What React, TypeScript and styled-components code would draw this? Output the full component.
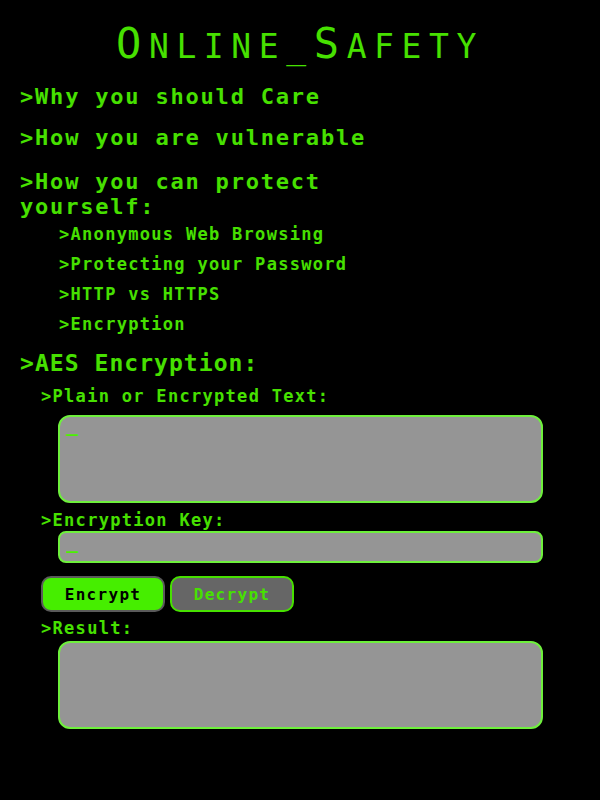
import React from "react";
import styled, { createGlobalStyle } from "styled-components";

const Global = createGlobalStyle`
  html, body { margin: 0; padding: 0; background: #000; }
  body { font-family: "DejaVu Sans Mono", "Liberation Mono", monospace; color: #47e000; }
  * { box-sizing: border-box; }
`;

const Page = styled.main`
  display: flex;
  flex-direction: column;
  padding: 22px 20px 40px;
  min-height: 800px;
  background: #000;
`;

const Title = styled.h1`
  margin: 0 0 12px;
  height: 50px;
  font-size: 33px;
  line-height: 50px;
  font-weight: normal;
  text-transform: uppercase;
  letter-spacing: 7.6px;
  text-align: center;
  color: #47e000;
`;

const Cap = styled.span`
  font-size: 42px;
  line-height: 0;
`;

const Nav = styled.nav`
  display: flex;
  flex-direction: column;
  max-width: 400px;
`;

const Heading = styled.a<{ $mt?: number }>`
  display: block;
  margin-top: ${(p) => p.$mt ?? 0}px;
  font-size: 22px;
  line-height: 25px;
  font-weight: bold;
  letter-spacing: 1.8px;
  color: #47e000;
  text-decoration: none;
`;

const SubList = styled.ul`
  list-style: none;
  margin: 0;
  padding: 0 0 0 39px;
`;

const SubItem = styled.li`
  font-size: 17px;
  line-height: 30px;
  font-weight: bold;
  letter-spacing: 1.3px;
  white-space: nowrap;
`;

const Section = styled.section`
  display: flex;
  flex-direction: column;
  margin-top: 10px;
`;

const SectionTitle = styled.h2`
  margin: 0;
  font-size: 23px;
  line-height: 28px;
  font-weight: bold;
  letter-spacing: 1.05px;
`;

const Label = styled.label<{ $mt: number }>`
  display: block;
  margin: ${(p) => p.$mt}px 0 0 21px;
  font-size: 17px;
  line-height: 20px;
  font-weight: bold;
  letter-spacing: 1.3px;
`;

const Box = styled.textarea<{ $mt: number }>`
  display: block;
  margin: ${(p) => p.$mt + 1}px 0 0 38px;
  width: 485px;
  height: 88px;
  padding: 0 6px;
  background: #959595;
  border: 2px solid #6ef03c;
  border-radius: 12px;
  resize: none;
  font-family: "DejaVu Sans Mono", monospace;
  font-size: 20px;
  font-weight: bold;
  line-height: 14px;
  color: #47e000;
  outline: none;
  &::placeholder { color: #4cf000; opacity: 1; }
`;

const KeyInput = styled.input`
  display: block;
  margin: 1px 0 0 38px;
  width: 485px;
  height: 32px;
  padding: 0 6px 12px;
  background: #959595;
  border: 2px solid #6ef03c;
  border-radius: 8px;
  font-family: "DejaVu Sans Mono", monospace;
  font-size: 20px;
  font-weight: bold;
  color: #47e000;
  outline: none;
  &::placeholder { color: #4cf000; opacity: 1; }
`;

const ButtonRow = styled.div`
  display: flex;
  gap: 5px;
  margin: 13px 0 0 21px;
`;

const Btn = styled.button<{ $primary?: boolean }>`
  width: 124px;
  height: 36px;
  padding: 0;
  border-radius: 10px;
  border: 2px solid ${(p) => (p.$primary ? "#5a5a5a" : "#47e000")};
  background: ${(p) => (p.$primary ? "#46ee00" : "#666666")};
  color: ${(p) => (p.$primary ? "#000" : "#47e000")};
  font-family: "DejaVu Sans Mono", monospace;
  font-size: 16px;
  font-weight: bold;
  letter-spacing: 1.3px;
  cursor: pointer;
`;

export default function App() {
  return (
    <>
      <Global />
      <Page>
        <Title>
          <Cap>O</Cap>nline_<Cap>S</Cap>afety
        </Title>
        <Nav>
          <Heading href="#">&gt;Why you should Care</Heading>
          <Heading href="#" $mt={16}>&gt;How you are vulnerable</Heading>
          <Heading href="#" $mt={19}>&gt;How you can protect yourself:</Heading>
          <SubList>
            <SubItem>&gt;Anonymous Web Browsing</SubItem>
            <SubItem>&gt;Protecting your Password</SubItem>
            <SubItem>&gt;HTTP vs HTTPS</SubItem>
            <SubItem>&gt;Encryption</SubItem>
          </SubList>
        </Nav>
        <Section>
          <SectionTitle>&gt;AES Encryption:</SectionTitle>
          <Label $mt={9}>&gt;Plain or Encrypted Text:</Label>
          <Box $mt={8} placeholder="_" />
          <Label $mt={7}>&gt;Encryption Key:</Label>
          <KeyInput placeholder="_" />
          <ButtonRow>
            <Btn $primary>Encrypt</Btn>
            <Btn>Decrypt</Btn>
          </ButtonRow>
          <Label $mt={6}>&gt;Result:</Label>
          <Box $mt={2} readOnly />
        </Section>
      </Page>
    </>
  );
}
